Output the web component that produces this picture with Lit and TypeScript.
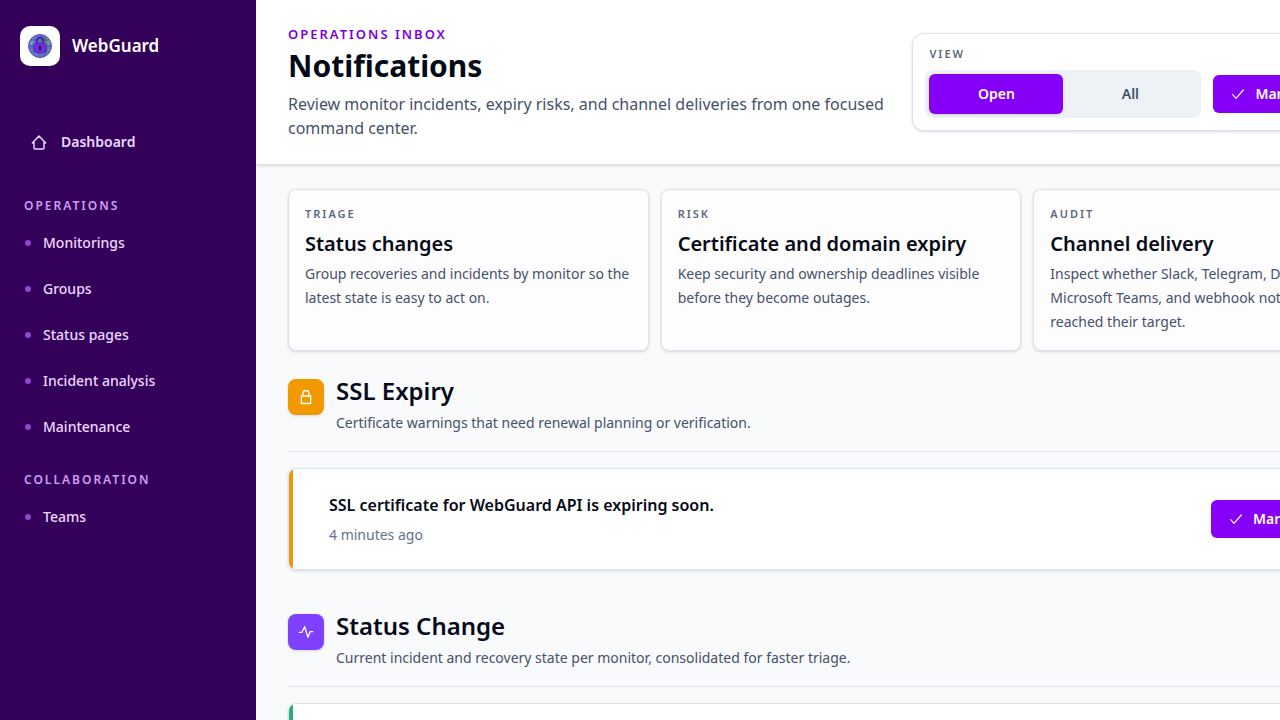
import { LitElement, html, css, svg } from "lit";
import { customElement, property, state } from "lit/decorators.js";
import { classMap } from "lit/directives/class-map.js";

const checkIcon = html`<svg width="16" height="16" viewBox="0 0 24 24" fill="none" stroke="currentColor" stroke-width="1.8" stroke-linecap="round" stroke-linejoin="round" aria-hidden="true"><path d="m4 13 5 5.500L20 6" /></svg>`;

const lockIcon = svg`<path d="M16.500 10.500V6.750a4.500 4.500 0 1 0-9 0v3.750M5 10.500h14v11.250H5z" />`;
const pulseIcon = svg`<path d="M2 12.500h4L10 4l5 16 3-8.500h4" />`;

interface Stage {
  label: string;
  title: string;
  text: string;
}

const stages: Stage[] = [
  { label: "Triage", title: "Status changes", text: "Group recoveries and incidents by monitor so the latest state is easy to act on." },
  { label: "Risk", title: "Certificate and domain expiry", text: "Keep security and ownership deadlines visible before they become outages." },
  { label: "Audit", title: "Channel delivery", text: "Inspect whether Slack, Telegram, Discord, Microsoft Teams, and webhook notifications reached their target." },
];

const navGroups = [
  { label: "Operations", items: ["Monitorings", "Groups", "Status pages", "Incident analysis", "Maintenance"] },
  { label: "Collaboration", items: ["Teams"] },
];

@customElement("wg-sidebar")
class WgSidebar extends LitElement {
  static styles = css`
    :host {
      display: block;
      box-sizing: border-box;
      flex: 0 0 256px;
      background: #33005a;
      color: #edd9ff;
      padding: 26px 12px 24px;
    }
    .brand {
      display: flex;
      align-items: center;
      gap: 12px;
      padding: 0 8px;
      color: #fff;
      font-size: 17px;
      line-height: 24px;
      font-weight: 600;
      text-decoration: none;
    }
    .mark {
      display: grid;
      place-items: center;
      width: 40px;
      height: 40px;
      border-radius: 10px;
      background: #fff;
    }
    .home {
      display: flex;
      align-items: center;
      gap: 14px;
      margin-top: 54px;
      padding: 12px 19px;
      color: #edd9ff;
      font-size: 14px;
      line-height: 20px;
      font-weight: 600;
      text-decoration: none;
    }
    .label {
      margin: 0;
      padding: 0 12px;
      font-size: 12px;
      line-height: 16px;
      font-weight: 600;
      letter-spacing: 2px;
      text-transform: uppercase;
      color: #d29df8;
    }
    .group {
      margin-top: 34px;
    }
    .group + .group {
      margin-top: 22px;
    }
    ul {
      list-style: none;
      margin: 6px 0 0;
      padding: 0;
    }
    .item {
      display: flex;
      align-items: center;
      gap: 12px;
      padding: 13px;
      color: #edd9ff;
      font-size: 14px;
      line-height: 20px;
      font-weight: 500;
      text-decoration: none;
    }
    .dot {
      width: 6px;
      height: 6px;
      border-radius: 50%;
      background: #8f4bcf;
    }
  `;

  render() {
    return html`
      <a class="brand" href="#">
        <span class="mark">
          <svg width="26" height="26" viewBox="0 0 26 26" aria-hidden="true">
            <circle cx="13" cy="13" r="11.5" fill="#5e74d0" stroke="#6b50a8" stroke-width="1" />
            <path d="M3 11q2-6 7-8l-1 5-4 5zM4 17l4 1 2 5q-4-2-6-6z" fill="#6ba3ea" />
            <path d="M17 3q5 2 6.5 8l-3 3-3-5zM20 17l3-1q-2 5-5 6z" fill="#6da184" />
            <path d="M2 13h22M4 7h18M4 19h18M9 2q-6 11 0 22M17 2q6 11 0 22" fill="none" stroke="#41459c" stroke-width=".7" />
            <path d="M9.5 11V8a3.500 3.500 0 0 1 7 0v3" fill="none" stroke="#5420a5" stroke-width="2.200" />
            <rect x="7" y="10" width="12" height="10" rx="4" fill="#7130d8" stroke="#5423a6" stroke-width=".8" />
            <path d="M13 13.500v3" stroke="#2a0a66" stroke-width="2" stroke-linecap="round" />
          </svg>
        </span>
        <span>WebGuard</span>
      </a>
      <nav aria-label="Main">
        <a class="home" href="#dashboard">
          <svg width="16" height="16" viewBox="0 0 24 24" fill="none" stroke="currentColor" stroke-width="2.2" stroke-linecap="round" stroke-linejoin="round" aria-hidden="true">
            <path d="M2 13.500 12 3l10 10.500M4.500 12v9a1.500 1.500 0 0 0 1.500 1.500h12a1.500 1.500 0 0 0 1.500-1.500v-9" />
          </svg>
          Dashboard
        </a>
        ${navGroups.map(
          (group) => html`
            <div class="group">
              <h2 class="label">${group.label}</h2>
              <ul>
                ${group.items.map(
                  (item) => html`<li><a class="item" href="#"><span class="dot"></span>${item}</a></li>`,
                )}
              </ul>
            </div>
          `,
        )}
      </nav>
    `;
  }
}

@customElement("wg-section")
class WgSection extends LitElement {
  @property() heading = "";
  @property() description = "";
  @property() message = "";
  @property() time = "";
  @property() tone: "amber" | "violet" = "amber";

  static styles = css`
    :host {
      display: block;
    }
    .head {
      display: flex;
      align-items: flex-start;
      gap: 12px;
      padding-bottom: 16px;
      border-bottom: 1px solid #dde3ec;
    }
    .badge {
      display: grid;
      place-items: center;
      width: 36px;
      height: 36px;
      margin-top: 4px;
      border-radius: 8px;
      color: #fff;
      box-shadow: 0 1px 3px #0f172a26;
    }
    .badge.amber {
      background: #f29900;
    }
    .badge.violet {
      background: #7f41ff;
    }
    h2 {
      margin: 0;
      font-size: 24px;
      line-height: 32px;
      font-weight: 600;
      color: #060a18;
    }
    .description {
      margin: 4px 0 0;
      font-size: 14px;
      line-height: 24px;
      color: #45516a;
    }
    .card {
      display: flex;
      align-items: center;
      justify-content: space-between;
      gap: 24px;
      margin-top: 16px;
      padding: 24px 24px 24px 40px;
      border: 1px solid #dbe2ea;
      border-radius: 8px;
      background: linear-gradient(to right, var(--bar) 4px, #fff 4px);
      box-shadow: 0 1px 3px #0f172a26;
    }
    .card.amber {
      --bar: #ea970c;
    }
    .card.violet {
      --bar: #27ad78;
    }
    .message {
      margin: 0 0 8px;
      font-size: 16px;
      line-height: 24px;
      font-weight: 600;
      color: #060a18;
    }
    time {
      display: block;
      font-size: 14px;
      line-height: 20px;
      color: #64738b;
    }
  `;

  render() {
    return html`
      <section>
        <header class="head">
          <span class="badge ${this.tone}">
            <svg width="16" height="16" viewBox="0 0 24 24" fill="none" stroke="currentColor" stroke-width="2" stroke-linecap="round" stroke-linejoin="round" aria-hidden="true">
              ${this.tone === "amber" ? lockIcon : pulseIcon}
            </svg>
          </span>
          <div>
            <h2>${this.heading}</h2>
            <p class="description">${this.description}</p>
          </div>
        </header>
        <article class="card ${this.tone}">
          <div>
            <p class="message">${this.message}</p>
            <time>${this.time}</time>
          </div>
          <wg-button label="Mark as read"></wg-button>
        </article>
      </section>
    `;
  }
}

@customElement("wg-button")
class WgButton extends LitElement {
  @property() label = "";

  static styles = css`
    :host {
      display: block;
      flex: none;
      min-width: 158px;
    }
    button {
      display: flex;
      align-items: center;
      gap: 9px;
      box-sizing: border-box;
      width: 100%;
      padding: 9px 17px;
      border: 0;
      border-radius: 6px;
      background: #8600f8;
      color: #fff;
      font: inherit;
      font-size: 14px;
      line-height: 20px;
      font-weight: 600;
      white-space: nowrap;
      cursor: pointer;
    }
  `;

  render() {
    return html`<button type="button">${checkIcon}<span>${this.label}</span></button>`;
  }
}

@customElement("app-root")
class AppRoot extends LitElement {
  @state() private view = "Open";

  static styles = css`
    :host {
      display: flex;
      height: 100vh;
      overflow: hidden;
      font-family: "Noto Sans", "Open Sans", sans-serif;
      background: #f8fafc;
      color: #060a18;
    }
    main {
      flex: 1 0 1170px;
      min-width: 0;
    }
    .top {
      display: flex;
      align-items: center;
      justify-content: space-between;
      gap: 24px;
      padding: 24px 32px;
      border-bottom: 1px solid #dde3ec;
      background: #fff;
      box-shadow: 0 1px 3px #0f172a26;
    }
    .intro {
      flex: 0 1 601px;
    }
    .eyebrow {
      margin: 0 0 4px;
      font-size: 13px;
      line-height: 20px;
      font-weight: 600;
      letter-spacing: 2px;
      text-transform: uppercase;
      color: #7a00e0;
    }
    h1 {
      margin: 0 0 8px;
      font-size: 30px;
      line-height: 36px;
      font-weight: 700;
    }
    .lead {
      margin: 0;
      font-size: 16px;
      line-height: 24px;
      color: #45516a;
    }
    .panel {
      box-sizing: border-box;
      flex: 0 0 481px;
      padding: 12px;
      border: 1px solid #dde3ec;
      border-radius: 12px;
      background: #fff;
      box-shadow: 0 1px 3px #0f172a26;
    }
    .label {
      margin: 0 0 8px;
      font-size: 11px;
      line-height: 16px;
      font-weight: 600;
      letter-spacing: 2px;
      text-transform: uppercase;
      color: #5b6880;
    }
    .panel .label {
      padding-left: 4px;
    }
    .controls {
      display: flex;
      align-items: center;
      gap: 12px;
    }
    .segment {
      display: grid;
      grid-template-columns: 1fr 1fr;
      flex: 0 0 268px;
      padding: 4px;
      border-radius: 8px;
      background: #eef2f6;
    }
    .controls wg-button {
      flex: 1;
    }
    .option {
      padding: 10px 16px;
      border: 0;
      border-radius: 6px;
      background: none;
      color: #45516a;
      font: inherit;
      font-size: 14px;
      line-height: 20px;
      font-weight: 600;
      cursor: pointer;
    }
    .option.active {
      background: #8600f8;
      color: #fff;
      box-shadow: 0 1px 3px #0f172a26;
    }
    .content {
      display: grid;
      gap: 24px;
      padding: 24px 32px;
    }
    .stages {
      display: grid;
      grid-template-columns: repeat(3, 1fr);
      gap: 12px;
    }
    .stage {
      padding: 16px;
      border: 1px solid #dde3ec;
      border-radius: 8px;
      background: #fdfdfe;
      box-shadow: 0 1px 3px #0f172a26;
    }
    .stage h2 {
      margin: 0 0 4px;
      font-size: 20px;
      line-height: 28px;
      font-weight: 600;
    }
    .stage p:last-child {
      margin: 0;
      font-size: 14px;
      line-height: 24px;
      color: #45516a;
    }
    .feed {
      display: grid;
      gap: 40px;
    }
  `;

  render() {
    return html`
      <wg-sidebar></wg-sidebar>
      <main>
        <header class="top">
          <div class="intro">
            <p class="eyebrow">Operations inbox</p>
            <h1>Notifications</h1>
            <p class="lead">Review monitor incidents, expiry risks, and channel deliveries from one focused command center.</p>
          </div>
          <div class="panel">
            <p class="label" id="view-label">View</p>
            <div class="controls">
              <div class="segment" role="group" aria-labelledby="view-label">
                ${["Open", "All"].map(
                  (name) => html`<button
                    type="button"
                    class=${classMap({ option: true, active: this.view === name })}
                    aria-pressed=${this.view === name}
                    @click=${() => (this.view = name)}
                  >${name}</button>`,
                )}
              </div>
              <wg-button label="Mark all as read"></wg-button>
            </div>
          </div>
        </header>
        <div class="content">
          <div class="stages">
            ${stages.map(
              (stage) => html`
                <article class="stage">
                  <p class="label">${stage.label}</p>
                  <h2>${stage.title}</h2>
                  <p>${stage.text}</p>
                </article>
              `,
            )}
          </div>
          <div class="feed">
            <wg-section
              tone="amber"
              heading="SSL Expiry"
              description="Certificate warnings that need renewal planning or verification."
              message="SSL certificate for WebGuard API is expiring soon."
              time="4 minutes ago"
            ></wg-section>
            <wg-section
              tone="violet"
              heading="Status Change"
              description="Current incident and recovery state per monitor, consolidated for faster triage."
              message="WebGuard API is back online."
              time="12 minutes ago"
            ></wg-section>
          </div>
        </div>
      </main>
    `;
  }
}
